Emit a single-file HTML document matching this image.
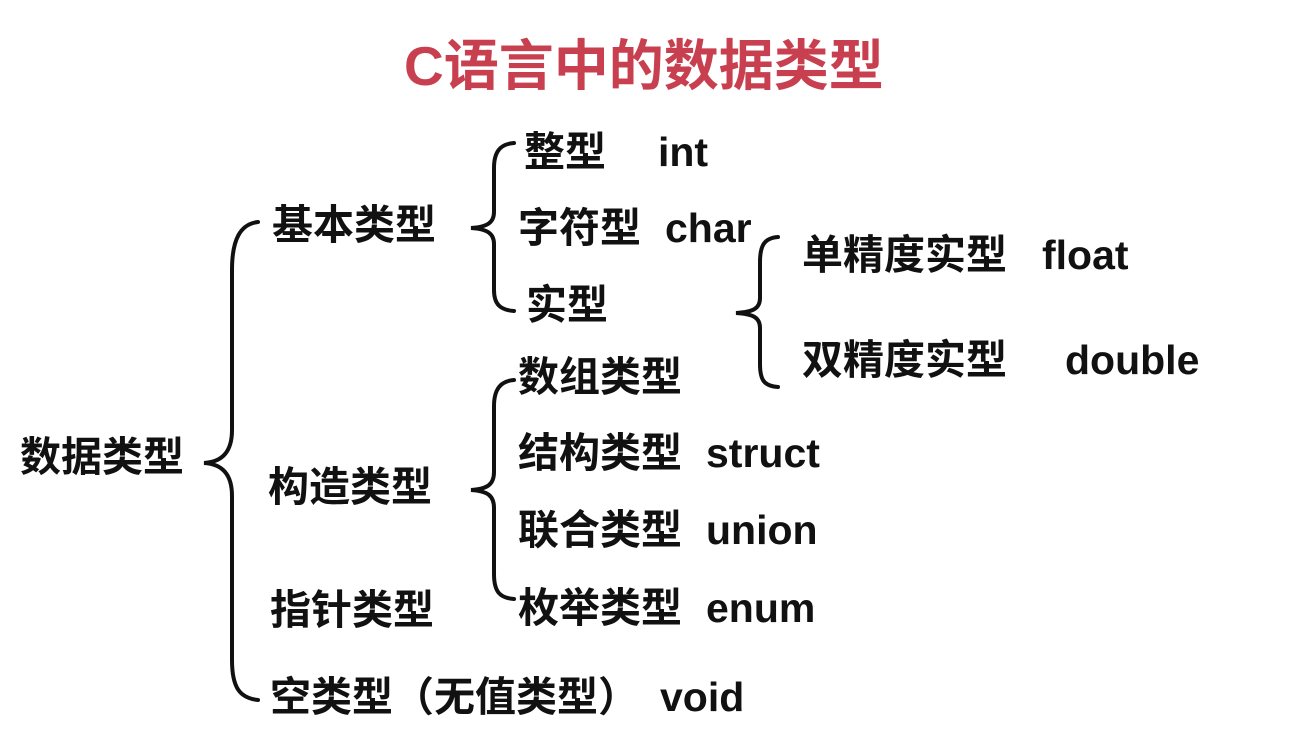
<!DOCTYPE html>
<html><head><meta charset="utf-8"><style>
body{margin:0;width:1290px;height:739px;background:#fff;position:relative;overflow:hidden;font-family:"Liberation Sans","Noto Sans CJK SC",sans-serif;font-weight:bold;color:#111}
.t{position:absolute;font-size:41px;line-height:44px;white-space:pre}
#title{position:absolute;left:404px;top:34px;font-size:55px;line-height:64px;color:#c8404f;white-space:nowrap}
svg{position:absolute;left:0;top:0}
</style></head><body>
<div id="title">C语言中的数据类型</div>
<svg width="1290" height="739"><g fill="none" stroke="#111" stroke-width="4" stroke-linecap="round">
<path d="M258 222 C240 224 232 240 232 270 L232 430 C232 452 222 462 204 463 C222 464 232 474 232 496 L232 660 C232 688 240 698 258 700"/>
<path d="M514 143 C500 144 494 152 494 168 L494 212 C494 222 488 227 471 228 C488 229 494 234 494 244 L494 290 C494 304 500 310 514 311"/>
<path d="M514 380 C500 381 494 390 494 406 L494 472 C494 484 488 489 471 490 C488 491 494 496 494 508 L494 574 C494 592 500 598 514 599"/>
<path d="M778 237 C764 238 760 246 760 262 L760 298 C760 308 754 312 736 313 C754 314 760 318 760 328 L760 364 C760 380 764 386 778 387"/>
</g></svg>
<div class="t" style="left:20px;top:435px">数据类型</div>
<div class="t" style="left:272px;top:203px">基本类型</div>
<div class="t" style="left:268px;top:465px">构造类型</div>
<div class="t" style="left:270px;top:588px">指针类型</div>
<div class="t" style="left:270px;top:675px">空类型（无值类型）</div><div class="t" style="left:660px;top:675px">void</div>
<div class="t" style="left:524px;top:130px">整型</div><div class="t" style="left:658px;top:130px">int</div>
<div class="t" style="left:518px;top:206px">字符型</div><div class="t" style="left:665px;top:206px">char</div>
<div class="t" style="left:526px;top:283px">实型</div>
<div class="t" style="left:802px;top:233px">单精度实型</div><div class="t" style="left:1042px;top:233px">float</div>
<div class="t" style="left:802px;top:338px">双精度实型</div><div class="t" style="left:1065px;top:338px">double</div>
<div class="t" style="left:518px;top:355px">数组类型</div>
<div class="t" style="left:518px;top:431px">结构类型</div><div class="t" style="left:706px;top:431px">struct</div>
<div class="t" style="left:518px;top:508px">联合类型</div><div class="t" style="left:706px;top:508px">union</div>
<div class="t" style="left:518px;top:586px">枚举类型</div><div class="t" style="left:706px;top:586px">enum</div>
</body></html>
